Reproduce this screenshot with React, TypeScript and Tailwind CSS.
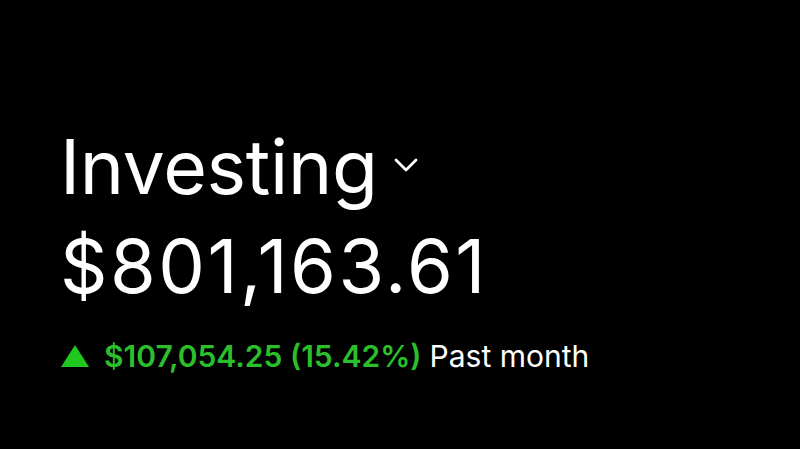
export default function App() {
  return (
    <div className="w-[800px] h-[449px] bg-black text-white overflow-hidden" style={{ fontFamily: "Inter, 'Noto Sans', sans-serif" }}>
      <div className="flex flex-col pl-[60px] pt-[129px]">
        <div className="flex items-center">
          <h1 className="text-[75px] leading-none font-normal tracking-[-0.3px]">Investing</h1>
          <svg width="24" height="16" viewBox="0 0 24 16" className="ml-[16px] mt-[-4px]" fill="none">
            <path d="M2 3 L12 13 L22 3" stroke="white" strokeWidth="2.8" strokeLinecap="round" strokeLinejoin="round" />
          </svg>
        </div>
        <div className="text-[74px] leading-none font-normal mt-[25px] tracking-[2.5px]">$801,163.61</div>
        <div className="flex items-center mt-[38px] text-[30px] leading-none">
          <svg width="30" height="24" viewBox="0 0 30 24" className="mr-[14px]">
            <polygon points="15,1 29,23 1,23" fill="#1ec81e" />
          </svg>
          <span className="text-[#2bbf2b] font-semibold">$107,054.25 (15.42%)</span>
          <span className="ml-[8px] text-white">Past month</span>
        </div>
      </div>
    </div>
  )
}
